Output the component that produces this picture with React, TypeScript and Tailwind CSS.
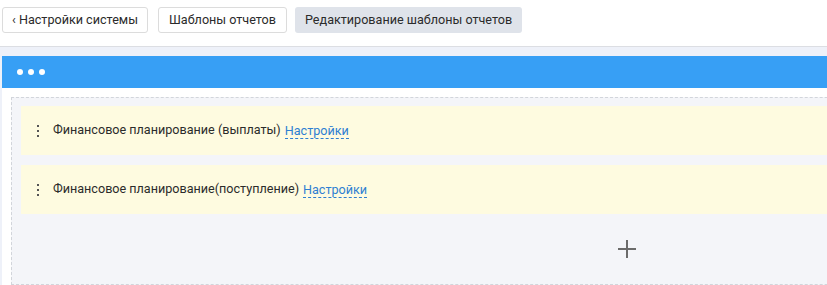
export default function App() {
  const items = [
    "Финансовое планирование (выплаты)",
    "Финансовое планирование(поступление)",
  ];

  return (
    <div className="w-screen h-[285px] overflow-hidden bg-white text-[12.6px] text-[#2b2b2b] font-['Roboto',sans-serif]">
      {/* Breadcrumbs */}
      <div className="h-[47px] border-b border-[#dcdee3] flex items-start pl-[2px] pt-[7px]">
        <button className="h-[26px] px-[9px] border border-[#dcdcdc] rounded-[3px] bg-white leading-none">
          ‹ Настройки системы
        </button>
        <button className="ml-[10px] h-[26px] px-[10px] border border-[#dcdcdc] rounded-[3px] bg-white leading-none">
          Шаблоны отчетов
        </button>
        <button className="ml-[8px] h-[26px] px-[10px] rounded-[3px] bg-[#dfe3ea] leading-none">
          Редактирование шаблоны отчетов
        </button>
      </div>

      <div className="bg-[#eef1f9] pt-[9px] pl-[2px]">
        <div className="bg-white w-[1300px]">
          {/* Panel header */}
          <div className="h-[32px] bg-[#379ff5] flex items-center gap-[5px] pl-[15px]">
            <span className="w-[6px] h-[6px] rounded-full bg-white" />
            <span className="w-[6px] h-[6px] rounded-full bg-white" />
            <span className="w-[6px] h-[6px] rounded-full bg-white" />
          </div>

          <div className="pt-[9px] pl-[9px]">
            <div className="w-[1231px] border border-dashed border-[#d2d5db] bg-[#f4f5f9] pt-[8px] px-[9px]">
              <div className="flex flex-col gap-[10px]">
                {items.map((name) => (
                  <div
                    key={name}
                    className="h-[49px] bg-[#fefbe0] flex items-center pl-[15px]"
                  >
                    <svg width="4" height="14" viewBox="0 0 4 14" className="mr-[13px] mt-[1px]">
                      <rect x="1" y="1" width="2" height="2" fill="#555" />
                      <rect x="1" y="6" width="2" height="2" fill="#555" />
                      <rect x="1" y="11" width="2" height="2" fill="#555" />
                    </svg>
                    <span>{name}</span>
                    <span className="ml-[4px] text-[#2f7fd2] border-b border-dashed border-[#2f7fd2] leading-[15px]">
                      Настройки
                    </span>
                  </div>
                ))}
              </div>
              <div className="h-[70px] flex items-center justify-center">
                <svg width="20" height="20" viewBox="0 0 20 20">
                  <path d="M10 1v18M1 10h18" stroke="#6b6b6b" strokeWidth="2" />
                </svg>
              </div>
            </div>
          </div>
        </div>
      </div>
    </div>
  );
}
